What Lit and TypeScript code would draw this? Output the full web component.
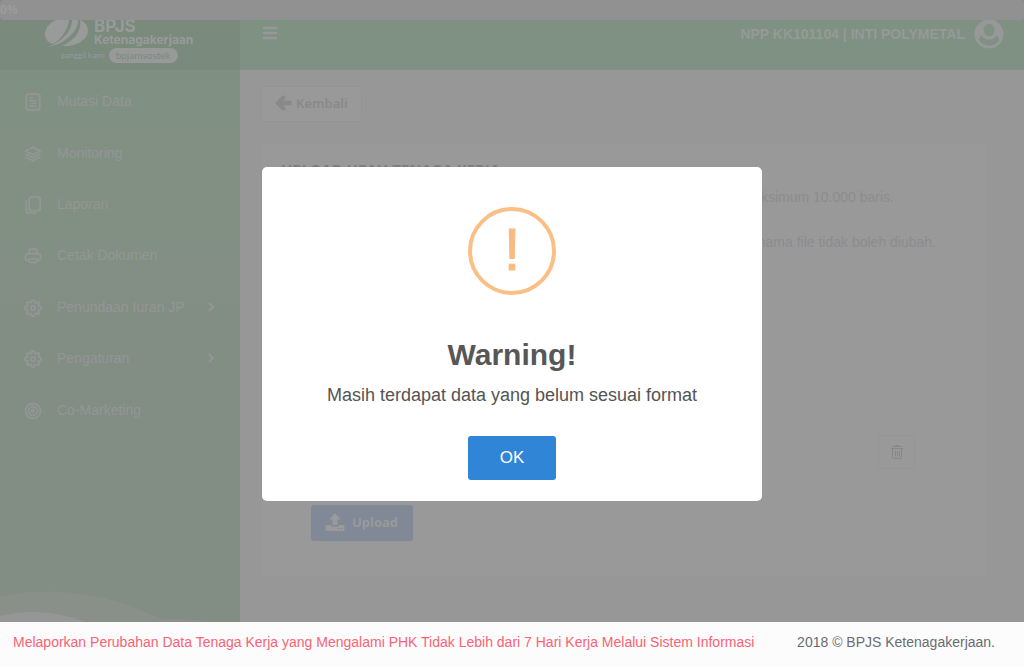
import { LitElement, html, css, svg, nothing } from "lit";
import { customElement, state } from "lit/decorators.js";

const gear = svg`
  <path d="M10.4 1.500h3.2l.6 3 1.700.7 2.500-1.700 2.200 2.200-1.700 2.500.7 1.700 3 .6v3.200l-3 .6-.7 1.700 1.700 2.500-2.200 2.200-2.500-1.700-1.700.7-.6 3h-3.200l-.6-3-1.700-.7-2.500 1.700-2.200-2.200 1.700-2.500-.7-1.700-3-.6v-3.200l3-.6.7-1.700-1.700-2.500 2.200-2.200 2.500 1.700 1.700-.7z"/>
  <circle cx="12" cy="12" r="3"/>`;

const icons: Record<string, unknown> = {
  doc: svg`<rect x="3" y="1.500" width="18" height="21" rx="2.500"/><path stroke-width="2" d="M7 6.700h5M7 10.200h10M9 13.800h8M7 17.300h10"/>`,
  layers: svg`<path d="M12 3 22 8 12 13 2 8zM2 12l10 5 10-5M2 16l10 5 10-5"/>`,
  copy: svg`<rect x="7" y="1.500" width="14.500" height="18" rx="3"/><path d="M3 5.500v14a3 3 0 0 0 3 3h11"/>`,
  print: svg`<path d="M7 9V3h10v6M6 18H4.500A2.500 2.500 0 0 1 2 15.500v-4A2.500 2.500 0 0 1 4.500 9h15a2.500 2.500 0 0 1 2.500 2.500v4a2.500 2.500 0 0 1-2.500 2.500H18"/><rect x="6.500" y="15.500" width="11" height="5" rx="2"/>`,
  gear,
  target: svg`<circle cx="12" cy="12" r="10"/><circle cx="12" cy="12" r="6"/><circle cx="12" cy="12" r="2"/>`,
};

const menu = [
  { icon: "doc", label: "Mutasi Data" },
  { icon: "layers", label: "Monitoring" },
  { icon: "copy", label: "Laporan" },
  { icon: "print", label: "Cetak Dokumen" },
  { icon: "gear", label: "Penundaan Iuran JP", sub: true },
  { icon: "gear", label: "Pengaturan", sub: true },
  { icon: "target", label: "Co-Marketing" },
];

@customElement("app-root")
export class AppRoot extends LitElement {
  @state() private open = true;

  static styles = css`
    :host {
      display: flex;
      flex-direction: column;
      height: 100vh;
      overflow: hidden;
      position: relative;
      background: #979797;
      color: #8c8c8e;
      font: 14px/20px "Liberation Sans", Arial, sans-serif;
    }
    * { box-sizing: border-box; }
    button { font: inherit; cursor: pointer; margin: 0; }
    a { color: inherit; text-decoration: none; }
    .progress {
      position: absolute;
      inset: 0 0 auto 0;
      height: 20px;
      background: #919191;
      border-radius: 4px;
      color: #9c9c9c;
      font: bold 12px/20px "Noto Sans", sans-serif;
      z-index: 2;
    }
    .shell { flex: 1; min-height: 0; display: flex; }
    .side {
      width: 240px;
      flex: none;
      display: flex;
      flex-direction: column;
      background: linear-gradient(#7d9083, #829083 30%, #828d84 60%, #828d84);
      color: #949696;
    }
    .brand {
      height: 70px;
      flex: none;
      padding: 17px 0 0 43px;
      background: #7a8a7d;
      color: #999b9a;
    }
    .brandrow { display: flex; gap: 5px; height: 31px; }
    .swirl { width: 46px; height: 31px; flex: none; }
    .name {
      display: flex;
      flex-direction: column;
      font-family: Inter, sans-serif;
      font-weight: 700;
    }
    .big { font-size: 17px; line-height: 18px; }
    .small { font-size: 12px; line-height: 10px; }
    .tag {
      display: flex;
      align-items: center;
      gap: 4px;
      padding-left: 18px;
      font: 8px/15px Lato, sans-serif;
    }
    .pill {
      background: #989a99;
      color: #7a8a7d;
      border-radius: 8px;
      padding: 0 7px;
      font-size: 10px;
    }
    .menu {
      list-style: none;
      margin: 6px 0 0;
      padding: 0;
      height: 360px;
      flex: none;
      display: grid;
      grid-auto-rows: 1fr;
    }
    .item {
      display: flex;
      align-items: center;
      height: 100%;
      padding: 0 24px 1px;
      gap: 15px;
    }
    .icon {
      width: 18px;
      height: 18px;
      flex: none;
      fill: none;
      stroke: currentColor;
      stroke-width: 2.4;
      stroke-linejoin: round;
      margin-top: 2px;
    }
    .chev { width: 10px; height: 10px; margin-left: auto; fill: none; stroke: currentColor; stroke-width: 2; }
    .waves { margin-top: auto; width: 100%; height: 32px; flex: none; display: block; }
    .main { flex: 1; min-width: 0; display: flex; flex-direction: column; }
    .top {
      height: 70px;
      flex: none;
      display: flex;
      align-items: center;
      justify-content: space-between;
      padding: 0 20px 2px 22px;
      background: #7f9183;
      color: #979998;
      font-weight: bold;
    }
    .burger { border: 0; background: none; padding: 0 0 2px; color: inherit; display: flex; }
    .user { display: flex; align-items: center; gap: 9px; }
    .content {
      flex: 1;
      display: flex;
      flex-direction: column;
      align-items: flex-start;
      gap: 21px;
      padding: 16px 37px 45px 21px;
    }
    .back {
      display: flex;
      align-items: center;
      gap: 4px;
      height: 36px;
      padding: 0 13px 2px;
      border: 1px solid #949494;
      border-radius: 3px;
      background: #999;
      color: #898989;
      font: 600 13px/20px "Noto Sans", sans-serif;
    }
    .card {
      align-self: stretch;
      flex: 1;
      display: flex;
      flex-direction: column;
      border: 1px solid #969696;
      border-radius: 3px;
      background: #999;
      padding: 13px 19px 35px;
    }
    .title { margin: 0; font: bold 15px/24px "Noto Sans", sans-serif; color: #7e7e80; }
    .notes { margin: 6px 0 0; padding: 0; list-style: none; text-align: right; }
    .note { line-height: 20px; margin-bottom: 25px; }
    .first { padding-right: 73px; }
    .second { padding-right: 31px; }
    .actions { margin-top: auto; display: flex; flex-direction: column; gap: 36px; padding: 0 52px 0 30px; }
    .trash {
      align-self: flex-end;
      width: 37px;
      height: 34px;
      padding: 0;
      border: 1px solid #959595;
      border-radius: 3px;
      background: #999;
      color: #878787;
      display: grid;
      place-items: center;
    }
    .upload {
      align-self: flex-start;
      display: flex;
      align-items: center;
      gap: 7px;
      height: 36px;
      padding: 0 15px 2px 14px;
      border: 0;
      border-radius: 3px;
      background: #808995;
      color: #989a9c;
      font: 700 13px/20px "Noto Sans", sans-serif;
    }
    .foot {
      height: 45px;
      flex: none;
      display: flex;
      align-items: center;
      justify-content: space-between;
      padding: 0 29px 5px 13px;
      background: #fcfcfc;
      color: #6a6c72;
      white-space: nowrap;
    }
    .alert { color: #fb6274; }
    .veil { position: absolute; inset: 0; display: grid; place-items: center; z-index: 3; }
    .modal {
      width: min(500px, 92vw);
      display: flex;
      flex-direction: column;
      align-items: center;
      padding: 40px 20px 21px;
      border-radius: 5px;
      background: #fff;
      color: #545454;
      text-align: center;
    }
    .mark {
      width: 88px;
      height: 88px;
      border: 4px solid #fabf85;
      border-radius: 50%;
      color: #f8bb86;
      font-size: 60px;
      line-height: 78px;
      -webkit-text-stroke: 1px #f8bb86;
    }
    .head { margin: 40px 0 0; font-size: 30px; line-height: 40px; color: #575757; }
    .msg { margin: 10px 0 31px; font-size: 18px; line-height: 20px; }
    .ok {
      width: 88px;
      height: 44px;
      border: 0;
      border-radius: 3px;
      background: #3085d6;
      color: #fff;
      font-size: 17px;
    }
  `;

  render() {
    return html`
      <div class="progress" role="progressbar" aria-valuenow="0">0%</div>
      <div class="shell">
        <nav class="side">
          <div class="brand">
            <div class="brandrow">
              <svg class="swirl" viewBox="0 0 46 31" fill="currentColor">
                <path d="M26 1C14 0 2 7 2 17c0 6 4 9 8 10C18 22 26 12 26 1z"/>
                <path d="M29 1c1 11-7 22-24 29 14-2 31-14 30-28z"/>
                <path d="M37 3c2 12-7 21-18 26 15 1 26-7 26-15 0-5-3-9-8-11z"/>
              </svg>
              <div class="name"><span class="big">BPJS</span><span class="small">Ketenagakerjaan</span></div>
            </div>
            <div class="tag"><span>panggil kami</span><span class="pill">bpjamsostek</span></div>
          </div>
          <ul class="menu">
            ${menu.map((m) => html`
              <li><a class="item" href="#">
                <svg class="icon" viewBox="0 0 24 24">${icons[m.icon]}</svg>
                <span>${m.label}</span>
                ${m.sub ? html`<svg class="chev" viewBox="0 0 10 10"><path d="M3 1l4 4-4 4"/></svg>` : nothing}
              </a></li>`)}
          </ul>
          <svg class="waves" viewBox="0 0 240 32" preserveAspectRatio="none">
            <path fill="#899089" d="M0 6C50-4 110 2 160 29c20-1 35 0 50 3H0z"/>
            <path fill="#959695" d="M0 26c28-7 58-5 85 6H0z"/>
          </svg>
        </nav>
        <div class="main">
          <header class="top">
            <button class="burger" aria-label="Menu">
              <svg width="16" height="14" viewBox="0 0 16 14" stroke="currentColor" stroke-width="2.500" stroke-linecap="round"><path d="M2 2h12M2 7h12M2 12h12"/></svg>
            </button>
            <div class="user">
              <span>NPP KK101104 | INTI POLYMETAL</span>
              <svg width="30" height="30" viewBox="0 0 30 30">
                <circle cx="15" cy="15" r="14.500" fill="currentColor"/>
                <path fill="#7f9183" d="M7.500 16.500C5.500 17.500 5 19.500 5 21.500c2.300 3.400 6 5.200 10 5.200s7.700-1.800 10-5.200c0-2-.5-4-2.500-5-1.500 2.500-4.300 4-7.500 4s-6-1.500-7.500-4z"/>
                <ellipse cx="15" cy="11.500" rx="6.600" ry="7.800" fill="currentColor"/>
                <ellipse cx="15" cy="11" rx="5.400" ry="6.500" fill="#7f9183"/>
              </svg>
            </div>
          </header>
          <main class="content">
            <button class="back">
              <svg width="17" height="16" viewBox="0 0 17 16" fill="currentColor"><path d="M0 8 7.500.500 9 .500 10.500 2v1L8 5.800H16.500v4.400H8l2.500 2.800v1L9 15.500H7.500z"/></svg>
              Kembali
            </button>
            <section class="card">
              <h1 class="title">UPLOAD UPAH TENAGA KERJA</h1>
              <ul class="notes">
                <li class="note first">Jumlah data maksimum 10.000 baris.</li>
                <li class="note second">Format dan nama file tidak boleh diubah.</li>
              </ul>
              <div class="actions">
                <button class="trash" aria-label="Hapus">
                  <svg width="12" height="14" viewBox="0 0 12 14" fill="none" stroke="currentColor"><path d="M0 3.500h12M1 1.500h10M4 .500h4M1.500 3v9.500a1 1 0 0 0 1 1h7a1 1 0 0 0 1-1V3M4.500 6v5.500M6.500 6v5.500M8.500 6v5.500"/></svg>
                </button>
                <button class="upload">
                  <svg width="20" height="18" viewBox="0 0 20 18" fill="currentColor"><path d="M10 0l6 6.500h-3.500V12h-5V6.500H4zM1.500 12H6v1.500h8V12h4.500a1 1 0 0 1 1 1v4a1 1 0 0 1-1 1h-17a1 1 0 0 1-1-1v-4a1 1 0 0 1 1-1z"/><path fill="#808995" d="M13 15h1.500v1H13zM16 15h1.500v1H16z"/></svg>
                  Upload
                </button>
              </div>
            </section>
          </main>
        </div>
      </div>
      <footer class="foot">
        <span class="alert">Melaporkan Perubahan Data Tenaga Kerja yang Mengalami PHK Tidak Lebih dari 7 Hari Kerja Melalui Sistem Informasi</span>
        <span>2018 © BPJS Ketenagakerjaan.</span>
      </footer>
      ${this.open ? html`
        <div class="veil">
          <div class="modal" role="dialog" aria-modal="true" aria-labelledby="head">
            <div class="mark">!</div>
            <h2 class="head" id="head">Warning!</h2>
            <p class="msg">Masih terdapat data yang belum sesuai format</p>
            <button class="ok" @click=${() => (this.open = false)}>OK</button>
          </div>
        </div>` : nothing}
    `;
  }
}
